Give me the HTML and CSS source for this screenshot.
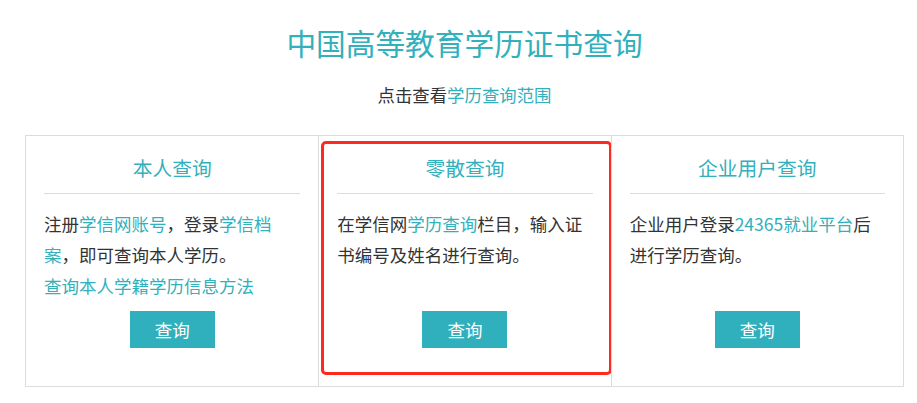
FILE: index.html
```html
<!DOCTYPE html>
<html lang="zh-CN">
<head>
<meta charset="utf-8">
<title>中国高等教育学历证书查询</title>
<link rel="stylesheet" href="styles.css">
</head>
<body>
<div class="page">
  <div class="header">
    <h1 class="title">中国高等教育学历证书查询</h1>
    <p class="subtitle">点击查看<a class="link" href="#">学历查询范围</a></p>
  </div>
  <div class="panels">
    <div class="panel">
      <h2 class="panel-title">本人查询</h2>
      <div class="desc">
        <p class="text">注册<a class="link" href="#">学信网账号</a>，登录<a class="link" href="#">学信档案</a>，即可查询本人学历。</p>
        <p class="text"><a class="link" href="#">查询本人学籍学历信息方法</a></p>
      </div>
      <a class="btn" href="#">查询</a>
    </div>
    <div class="panel panel-marked">
      <h2 class="panel-title">零散查询</h2>
      <div class="desc">
        <p class="text">在学信网<a class="link" href="#">学历查询</a>栏目，输入证书编号及姓名进行查询。</p>
      </div>
      <a class="btn" href="#">查询</a>
      <div class="mark"></div>
    </div>
    <div class="panel">
      <h2 class="panel-title">企业用户查询</h2>
      <div class="desc">
        <p class="text">企业用户登录<a class="link" href="#">24365就业平台</a>后进行学历查询。</p>
      </div>
      <a class="btn" href="#">查询</a>
    </div>
  </div>
</div>
</body>
</html>
```
FILE: styles.css
```css
* {
  box-sizing: border-box;
}

body {
  margin: 0;
  background: #fff;
  color: #333;
  font-family: "Noto Sans CJK SC", "Noto Sans", sans-serif;
}

.page {
  width: 879px;
  margin-left: 25px;
}

.header {
  text-align: center;
  padding-top: 23px;
}

.title {
  margin: 0;
  font-size: 29.7px;
  line-height: 40px;
  font-weight: normal;
  color: #32b0bc;
}

.subtitle {
  margin: 19px 0 0;
  font-size: 17.4px;
  line-height: 26px;
  color: #333;
}

.link {
  color: #32b0bc;
  text-decoration: none;
}

.panels {
  margin-top: 27px;
  display: grid;
  grid-template-columns: repeat(3, 1fr);
  border: 1px solid #dcdcdc;
}

.panel {
  position: relative;
  display: flex;
  flex-direction: column;
  padding: 17px 18px 38px;
}

.panel + .panel {
  border-left: 1px solid #dcdcdc;
}

.panel-title {
  margin: 0;
  padding-bottom: 10px;
  border-bottom: 1px solid #dcdcdc;
  text-align: center;
  font-size: 19.75px;
  line-height: 30px;
  font-weight: normal;
  color: #32b0bc;
}

.desc {
  flex: 1;
  margin-top: 14px;
  margin-bottom: 10px;
}

.text {
  margin: 0;
  font-size: 17.5px;
  line-height: 31px;
  color: #333;
}

.btn {
  align-self: center;
  width: 85px;
  height: 37px;
  line-height: 37px;
  text-align: center;
  background: #30b0bc;
  color: #fff;
  font-size: 17.5px;
  text-decoration: none;
}

.mark {
  position: absolute;
  left: 2px;
  top: 5px;
  width: 291px;
  height: 234px;
  border: 3px solid #ff2a1e;
  border-radius: 5px;
  pointer-events: none;
}
```
